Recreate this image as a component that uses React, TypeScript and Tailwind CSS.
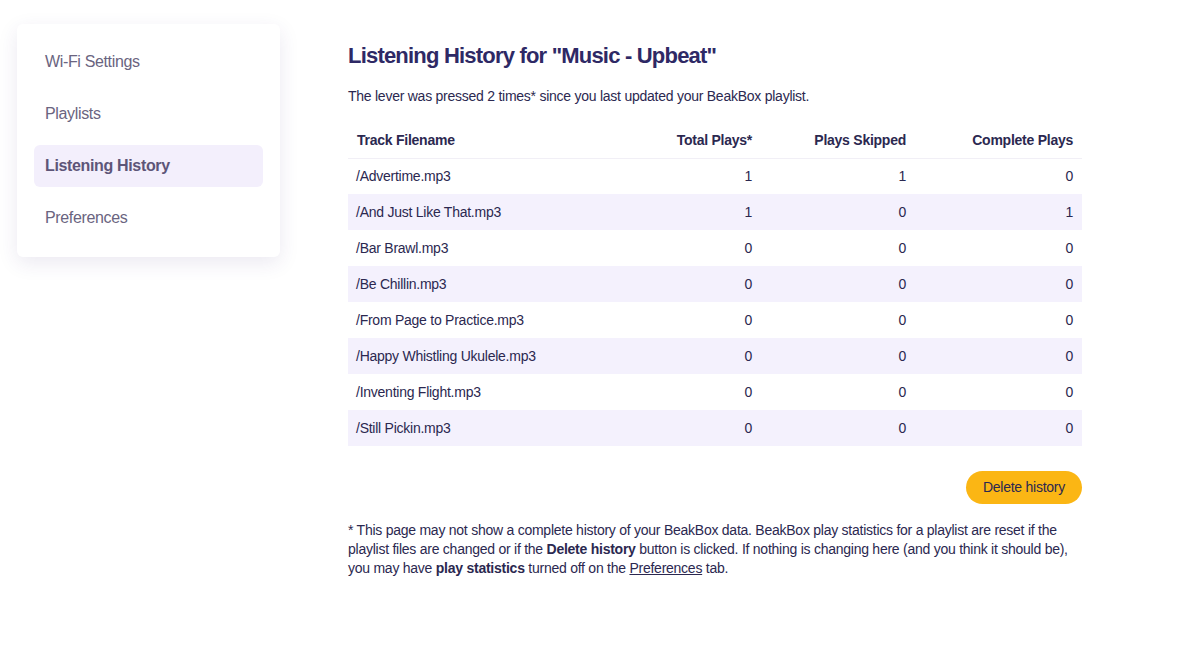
import React from 'react'

const navItems = ['Wi-Fi Settings', 'Playlists', 'Listening History', 'Preferences']

const rows: [string, number, number, number][] = [
  ['/Advertime.mp3', 1, 1, 0],
  ['/And Just Like That.mp3', 1, 0, 1],
  ['/Bar Brawl.mp3', 0, 0, 0],
  ['/Be Chillin.mp3', 0, 0, 0],
  ['/From Page to Practice.mp3', 0, 0, 0],
  ['/Happy Whistling Ukulele.mp3', 0, 0, 0],
  ['/Inventing Flight.mp3', 0, 0, 0],
  ['/Still Pickin.mp3', 0, 0, 0],
]

export default function App() {
  const active = 'Listening History'
  return (
    <div className="min-h-[647px] bg-white flex items-start font-['Liberation_Sans',Arial,sans-serif] text-[#2b2850]">
      <aside className="ml-[17px] mt-[24px] w-[263px] bg-white rounded-md shadow-[0_6px_20px_rgba(60,40,120,0.10)] px-[17px] pt-[17px] pb-[18px] flex flex-col gap-[10px]">
        {navItems.map((item) => (
          <div
            key={item}
            className={
              'h-[42px] flex items-center px-[11px] rounded-md text-[16px] tracking-[-0.35px] ' +
              (item === active ? 'bg-[#f3effc] font-bold text-[#5d5578]' : 'text-[#6a6480]')
            }
          >
            {item}
          </div>
        ))}
      </aside>

      <main className="ml-[68px] mt-[42px] w-[734px] text-[14px] tracking-[-0.25px]">
        <h1 className="text-[22px] font-bold text-[#2e2965] leading-[28px] tracking-[-0.8px]">
          Listening History for "Music - Upbeat"
        </h1>
        <p className="mt-[16px] leading-[20px]">
          The lever was pressed 2 times* since you last updated your BeakBox playlist.
        </p>

        <table className="mt-[17px] w-full table-fixed border-collapse">
          <colgroup>
            <col className="w-[252px]" />
            <col className="w-[161px]" />
            <col className="w-[154px]" />
            <col className="w-[167px]" />
          </colgroup>
          <thead>
            <tr className="h-[35px] border-b border-[#f1eff6]">
              <th className="text-left font-bold pl-[9px]">Track Filename</th>
              <th className="text-right font-bold pr-[9px]">Total Plays*</th>
              <th className="text-right font-bold pr-[9px]">Plays Skipped</th>
              <th className="text-right font-bold pr-[9px]">Complete Plays</th>
            </tr>
          </thead>
          <tbody>
            {rows.map(([name, total, skipped, complete], i) => (
              <tr key={name} className={'h-[36px] ' + (i % 2 === 1 ? 'bg-[#f4f1fd]' : 'bg-white')}>
                <td className="pl-[8px]">{name}</td>
                <td className="text-right pr-[9px]">{total}</td>
                <td className="text-right pr-[9px]">{skipped}</td>
                <td className="text-right pr-[9px]">{complete}</td>
              </tr>
            ))}
          </tbody>
        </table>

        <div className="mt-[25px] flex justify-end">
          <button className="h-[33px] px-[17px] rounded-full bg-[#fbb614] text-[#2b2850]">Delete history</button>
        </div>

        <p className="mt-[17px] leading-[19px]">
          * This page may not show a complete history of your BeakBox data. BeakBox play statistics for a playlist are
          reset if the playlist files are changed or if the <b>Delete history</b> button is clicked. If nothing is
          changing here (and you think it should be), you may have <b>play statistics</b> turned off on the{' '}
          <span className="underline">Preferences</span> tab.
        </p>
      </main>
    </div>
  )
}
